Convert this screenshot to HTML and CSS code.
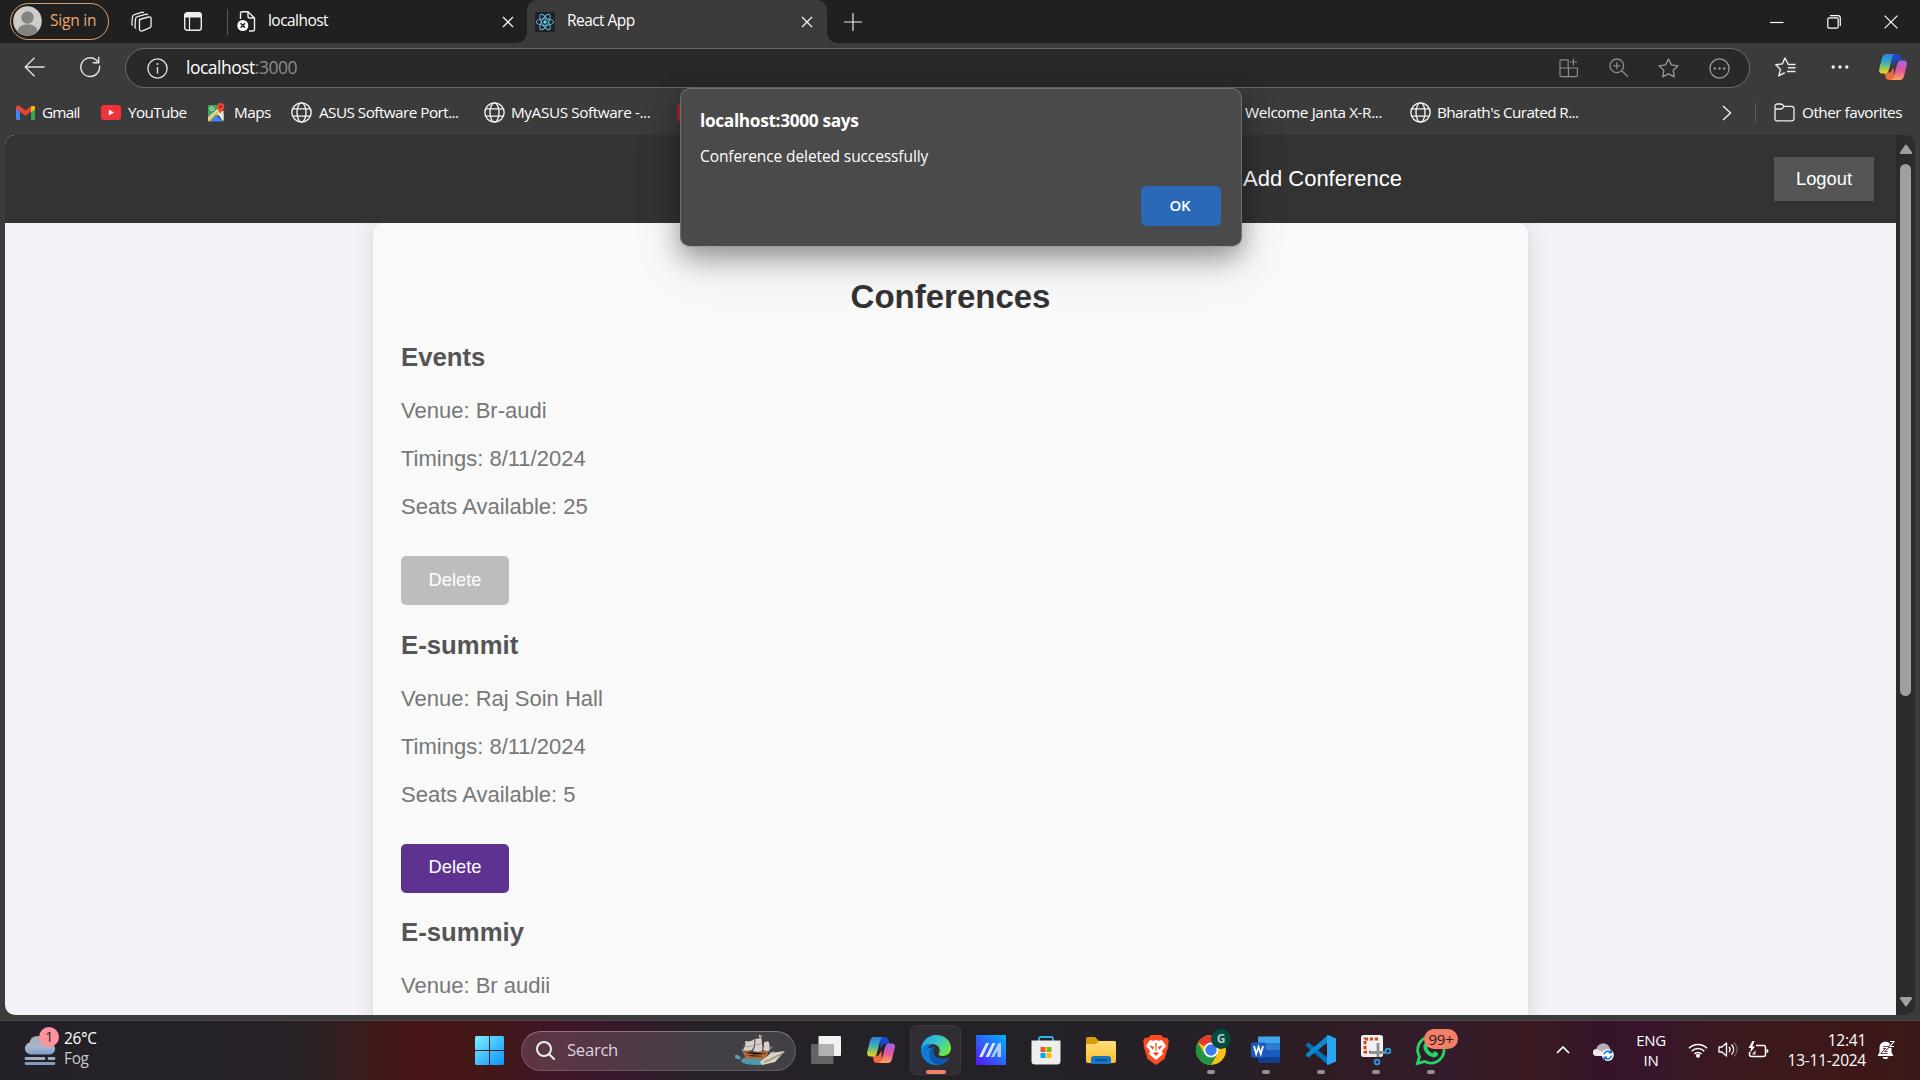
FILE: index.html
```html
<!DOCTYPE html>
<html lang="en">
<head>
<meta charset="utf-8">
<title>React App</title>
<link rel="stylesheet" href="styles.css">
</head>
<body>
<svg class="defs" width="0" height="0">
  <defs>
    <linearGradient id="cpA" x1="0" y1="0" x2="0" y2="1"><stop offset="0" stop-color="#2f7fe0"/><stop offset=".4" stop-color="#35a9c4"/><stop offset=".7" stop-color="#8cc561"/><stop offset="1" stop-color="#f6cf1e"/></linearGradient>
    <linearGradient id="cpB" x1="0" y1="0" x2="0" y2="1"><stop offset="0" stop-color="#a163ee"/><stop offset=".5" stop-color="#e4539c"/><stop offset="1" stop-color="#fba45e"/></linearGradient>
    <linearGradient id="win" x1="0" y1="0" x2="1" y2="1"><stop offset="0" stop-color="#7cf0ff"/><stop offset="1" stop-color="#0a92ff"/></linearGradient>
    <linearGradient id="edgeTop" x1="0" y1="0" x2="1" y2=".6"><stop offset="0" stop-color="#1a9fe0"/><stop offset=".5" stop-color="#35c1cf"/><stop offset="1" stop-color="#6be84a"/></linearGradient>
    <linearGradient id="asus" x1="0" y1="1" x2="1" y2="0"><stop offset="0" stop-color="#5a12f5"/><stop offset=".5" stop-color="#2b66f8"/><stop offset="1" stop-color="#00b4ff"/></linearGradient>
    <linearGradient id="folder" x1="0" y1="0" x2="0" y2="1"><stop offset="0" stop-color="#ffe07a"/><stop offset="1" stop-color="#fcbf2c"/></linearGradient>
    <linearGradient id="cloud" x1="0" y1="0" x2="0" y2="1"><stop offset="0" stop-color="#a9adb3"/><stop offset=".6" stop-color="#a7b4cb"/><stop offset="1" stop-color="#7f9dd0"/></linearGradient>
    <symbol id="copilot" viewBox="0 0 28 26">
      <path d="M13 0h5c2 0 3 1 3.500 3l1 4h-6l-3 5z" fill="#1c48c8"/>
      <path d="M15 26h-5c-2 0-3-1-3.500-3l-1-4.500h6l3-5z" fill="#ef6a3c"/>
      <path d="M7 0h9c-2 1-2.600 2.500-3.200 5L10 15.500c-.8 3-2 4-4.500 4H3C.6 19.500-.4 17.500.2 15L3 4C3.700 1.500 5 0 7 0z" fill="url(#cpA)"/>
      <path d="M21 26h-9c2-1 2.600-2.500 3.200-5L18 10.500c.8-3 2-4 4.500-4H25c2.400 0 3.400 2 2.800 4.500L25 22c-.7 2.500-2 4-4 4z" fill="url(#cpB)"/>
    </symbol>
    <symbol id="globe" viewBox="0 0 20 20">
      <g fill="none" stroke="#f4f4f4" stroke-width="1.300"><circle cx="10" cy="10" r="9.200"/><ellipse cx="10" cy="10" rx="4.300" ry="9.200"/><path d="M1.800 6.500h16.400M1.800 13.500h16.400"/></g>
    </symbol>
    <symbol id="close" viewBox="0 0 12 12"><path d="M1 1l10 10M11 1L1 11" stroke="#f0f0f0" stroke-width="1.300" fill="none"/></symbol>
  </defs>
</svg>

<div class="screen">
  <header class="tabbar">
    <div class="profile">
      <svg width="29" height="30" viewBox="0 0 29 30"><ellipse cx="14.500" cy="15" rx="14.300" ry="14.800" fill="#cfcdca"/><circle cx="14.500" cy="11.500" r="6.200" fill="#858380"/><path d="M4.500 25c1-5 5-6.500 10-6.500s9 1.500 10 6.500c-5 6-15 6-20 0z" fill="#858380"/></svg>
      <span>Sign in</span>
    </div>
    <svg class="workspaces" width="22" height="22" viewBox="0 0 22 22" fill="none" stroke="#ededed" stroke-width="1.300"><path d="M8.500 8.500l9-2.500c1.500-.4 2.600.3 2.600 1.500v7c0 1.300-.6 2-1.600 2.300l-7 3c-1.800.7-3-.2-3-1.600z"/><path d="M5.200 17.500c-1-.3-1.300-1-1.200-2L4.500 8c.1-1.200.8-2 2-2.300l8-2.400c1-.3 2 0 2.300.8"/><path d="M1.700 14.500C1 14 .8 13.300.9 12.500L1.500 6c.1-1.300.8-2 2-2.300l7-2.300c1-.3 1.800-.1 2.200.6"/></svg>
    <svg class="vertical-tabs" width="18" height="19" viewBox="0 0 18 19"><rect x=".7" y=".7" width="16.600" height="17.600" rx="2.500" fill="none" stroke="#eee" stroke-width="1.400"/><path d="M1 1h16v4.500H1z" fill="#eee"/><path d="M5.500 5v13" stroke="#eee" stroke-width="1.200"/></svg>
    <i class="tab-divider"></i>
    <div class="tab">
      <svg width="19" height="21" viewBox="0 0 19 21"><path d="M3.500 8V2.500C3.500 1.300 4 .8 5 .8h6L17.500 7v11c0 1.300-.6 2-1.800 2H12M11 1v4.500C11 6.600 11.500 7 12.500 7h5" fill="none" stroke="#eee" stroke-width="1.400"/><circle cx="5.800" cy="14.500" r="5.500" fill="#fff"/><path d="M3.600 12.300l4.400 4.400m0-4.400l-4.400 4.400" stroke="#222" stroke-width="1.500"/></svg>
      <span class="tab-title">localhost</span>
      <svg class="tab-close" width="12" height="12"><use href="#close"/></svg>
    </div>
    <div class="tab active">
      <svg width="20" height="20" viewBox="0 0 20 20"><rect width="20" height="20" rx="2" fill="#202124"/><g fill="none" stroke="#61c5e0" stroke-width=".9"><ellipse cx="10" cy="10" rx="8.800" ry="3.300"/><ellipse cx="10" cy="10" rx="8.800" ry="3.300" transform="rotate(60 10 10)"/><ellipse cx="10" cy="10" rx="8.800" ry="3.300" transform="rotate(120 10 10)"/></g><circle cx="10" cy="10" r="1.700" fill="#70dcf5"/></svg>
      <span class="tab-title">React App</span>
      <svg class="tab-close" width="12" height="12"><use href="#close"/></svg>
    </div>
    <svg class="new-tab" width="18" height="18" viewBox="0 0 18 18"><path d="M9 0v18M0 9h18" stroke="#e8e8e8" stroke-width="1.200"/></svg>
    <div class="window-controls">
      <svg width="14" height="14" viewBox="0 0 14 14"><path d="M0 7.500h13.500" stroke="#fff" stroke-width="1.200"/></svg>
      <svg width="14" height="14" viewBox="0 0 14 14" fill="none" stroke="#fff" stroke-width="1.200"><rect x=".8" y="2.800" width="10.400" height="10.400" rx="1.500"/><path d="M3 .7h8c1.500 0 2.300.8 2.300 2.300v8"/></svg>
      <svg width="14" height="14" viewBox="0 0 14 14"><path d="M.6.6l12.800 12.800M13.400.6L.6 13.400" stroke="#fff" stroke-width="1.200"/></svg>
    </div>
  </header>

  <div class="toolbar">
    <svg class="back" width="21" height="20" viewBox="0 0 21 20" fill="none" stroke="#e4e4e4" stroke-width="1.300"><path d="M10.500.8L1.200 10l9.300 9.200M1.200 10H20.500"/></svg>
    <svg class="reload" width="21" height="22" viewBox="0 0 21 22" fill="none" stroke="#e4e4e4" stroke-width="1.400"><path d="M19.500 9.500A9.400 9.400 0 1 1 16 3.700l2.500 2.800M18.700.8v6h-6"/></svg>
    <div class="address">
      <svg width="21" height="21" viewBox="0 0 21 21"><circle cx="10.500" cy="10.500" r="9.600" fill="none" stroke="#e4e4e4" stroke-width="1.300"/><path d="M10.500 9v6.500" stroke="#e4e4e4" stroke-width="1.400"/><circle cx="10.500" cy="6" r="1" fill="#e4e4e4"/></svg>
      <span class="url">localhost<span class="port">:3000</span></span>
      <div class="address-actions">
        <svg width="20" height="20" viewBox="0 0 20 20" fill="none" stroke="#8b8b8b" stroke-width="1.200"><path d="M9.200 10V1.800H2.200c-.8 0-1.200.4-1.200 1.200v14.500c0 .8.400 1.200 1.200 1.200h15c.8 0 1.200-.4 1.200-1.200V10H1M9.500 10v8.500M14.500.5v7M11 4h7"/></svg>
        <svg width="20" height="20" viewBox="0 0 20 20" fill="none" stroke="#8b8b8b" stroke-width="1.300"><circle cx="7.800" cy="7.800" r="6.800"/><path d="M12.800 12.800l6 6M7.800 4.300v7M4.300 7.800h7"/></svg>
        <svg width="21" height="20" viewBox="0 0 21 20" fill="none" stroke="#999" stroke-width="1.300" stroke-linejoin="round"><path d="M10.500 1l2.900 5.900 6.500.9-4.700 4.600 1.100 6.500-5.800-3-5.800 3 1.100-6.500L1.100 7.800l6.500-.9z"/></svg>
        <svg width="21" height="21" viewBox="0 0 21 21"><circle cx="10.500" cy="10.500" r="9.600" fill="none" stroke="#999" stroke-width="1.300"/><g fill="#999"><circle cx="5.800" cy="10.500" r="1.200"/><circle cx="10.500" cy="10.500" r="1.200"/><circle cx="15.200" cy="10.500" r="1.200"/></g></svg>
      </div>
    </div>
    <svg class="favorites" width="21" height="20" viewBox="0 0 21 20" fill="none" stroke="#eee" stroke-width="1.400" stroke-linejoin="round"><path d="M20.500 7.500h-7.200L10 1 7.300 6.900l-6.500.9 4.700 4.600-1.700 6.500 6-3.200M13 10.800h7.500M12 14.500h8.500"/></svg>
    <svg class="more" width="18" height="4" viewBox="0 0 18 4" fill="#f0f0f0"><circle cx="2.200" cy="2" r="1.700"/><circle cx="9" cy="2" r="1.700"/><circle cx="15.800" cy="2" r="1.700"/></svg>
    <svg class="copilot" width="28" height="26"><use href="#copilot"/></svg>
  </div>

  <nav class="bookmarks">
    <a class="bm gmail"><svg width="19" height="15" viewBox="0 0 19 15"><path d="M0 2v11.500C0 14.500.5 15 1.500 15H4V5z" fill="#4285f4"/><path d="M19 2v11.500c0 1-.5 1.500-1.500 1.500H15V5z" fill="#34a853"/><path d="M0 2.500C0 .5 2 0 3.200.8L9.500 5.500 15.800.8V6L9.500 10.700 0 3.700z" fill="#ea4335"/><path d="M15 1.500C17 0 19 .7 19 2.500v2L15 7.300z" fill="#fbbc04"/></svg><span>Gmail</span></a>
    <a class="bm youtube"><svg width="20" height="15" viewBox="0 0 20 15"><rect width="20" height="15" rx="3" fill="#f0323c"/><path d="M7.800 4.500v6l5.200-3z" fill="#fff"/></svg><span>YouTube</span></a>
    <a class="bm maps"><svg width="19" height="19" viewBox="0 0 19 19"><path d="M1 16.500V3.500C1 2.500 1.500 2 2.500 2H12v5.500L1 16.500z" fill="#3fa55f"/><path d="M1 14.500L11 5.500l5.500 5.500v6L10 11l-8 7.500Q1 18 1 17z" fill="#e4e8ea"/><path d="M1.300 15.500L13 5.500l3 3.500-2.500 1L3 18.500Q1 18.500 1.300 15.500z" fill="#f4c542"/><path d="M2.500 18.500L9 11.500l6.500 7z" fill="#4285f4"/><path d="M11 10.500l5.500-3V17q0 1-1 1z" fill="#e4e8ea"/><circle cx="4.800" cy="5.800" r="1.700" fill="none" stroke="#d5ead9"/><path d="M13.500 11c-.3-3-3.700-4-3.700-7.200a3.800 3.800 0 0 1 7.600 0c0 3.200-3.600 4.200-3.900 7.200z" fill="#e2483b"/><circle cx="13.600" cy="3.800" r="1.300" fill="#8c1e18"/></svg><span>Maps</span></a>
    <a class="bm asus"><svg width="21" height="21"><use href="#globe"/></svg><span>ASUS Software Port...</span></a>
    <a class="bm myasus"><svg width="21" height="21"><use href="#globe"/></svg><span>MyASUS Software -...</span></a>
    <i class="bm-red"></i>
    <a class="bm welcome"><span>Welcome Janta X-R...</span></a>
    <a class="bm bharath"><svg width="21" height="21"><use href="#globe"/></svg><span>Bharath's Curated R...</span></a>
    <div class="bm-end">
      <svg class="bm-more" width="10" height="16" viewBox="0 0 10 16"><path d="M1 1l7.500 7L1 15" fill="none" stroke="#eee" stroke-width="1.400"/></svg>
      <i class="bm-divider"></i>
      <a class="bm other"><svg width="21" height="19" viewBox="0 0 21 19" fill="none" stroke="#eee" stroke-width="1.300"><path d="M1 15.500V3.500C1 2 1.800 1 3.300 1h3.500c.8 0 1.200.3 1.700.8L10 3.400h7.700c1.500 0 2.300.8 2.300 2.300v9.800c0 1.500-.8 2.400-2.300 2.400H3.300C1.800 17.900 1 17 1 15.500zM1 6h5.800c.8 0 1.200-.3 1.700-.8L10 3.400"/></svg><span>Other favorites</span></a>
    </div>
  </nav>

  <div class="viewport">
    <div class="page">
      <div class="navbar">
        <a class="nav-link">Add Conference</a>
        <button class="logout">Logout</button>
      </div>
      <main class="content">
        <section class="card">
          <h2>Conferences</h2>
          <article class="conference">
            <h3>Events</h3>
            <p>Venue: Br-audi</p>
            <p>Timings: 8/11/2024</p>
            <p>Seats Available: 25</p>
            <button class="delete disabled">Delete</button>
          </article>
          <article class="conference">
            <h3>E-summit</h3>
            <p>Venue: Raj Soin Hall</p>
            <p>Timings: 8/11/2024</p>
            <p>Seats Available: 5</p>
            <button class="delete">Delete</button>
          </article>
          <article class="conference">
            <h3>E-summiy</h3>
            <p>Venue: Br audii</p>
          </article>
        </section>
      </main>
    </div>
    <div class="scrollbar">
      <svg width="14" height="11" viewBox="0 0 14 11"><path d="M6 1.200L1.200 8c-.6 1-.2 2 1 2h9.600c1.200 0 1.600-1 1-2L8 1.200c-.6-.8-1.400-.8-2 0z" fill="#9f9f9f"/></svg>
      <i class="thumb"></i>
      <svg width="14" height="11" viewBox="0 0 14 11"><path d="M6 9.800L1.200 3c-.6-1-.2-2 1-2h9.600c1.200 0 1.600 1 1 2L8 9.800c-.6.800-1.400.8-2 0z" fill="#9f9f9f"/></svg>
    </div>
  </div>

  <footer class="taskbar">
    <div class="weather">
      <div class="weather-icon">
        <svg width="32" height="32" viewBox="0 0 32 32"><path d="M8 21.500c-4.500 0-7-2.500-7-6 0-3 2-5.500 4.500-5.800C6.500 5 9.500 3 14 3c5 0 8 3 8.500 6.500 5 0 8.500 2 8.500 6.200 0 3.500-2.500 5.800-6.500 5.800z" fill="url(#cloud)"/><path d="M2 25.500h18M25 25.500h5" stroke="#a1b0bf" stroke-width="2.800" stroke-linecap="round"/><path d="M2 30.500h28" stroke="#8499bf" stroke-width="2.800" stroke-linecap="round"/></svg>
        <b class="weather-badge">1</b>
      </div>
      <div class="weather-text"><span>26°C</span><span class="dim">Fog</span></div>
    </div>
    <svg class="start" width="29" height="29" viewBox="0 0 29 29" fill="url(#win)"><path d="M0 1.500Q0 0 1.500 0H14v14H0zM15 0h12.500Q29 0 29 1.500V14H15zM0 15h14v14H1.500Q0 29 0 27.500zM15 15h14v12.500q0 1.500-1.500 1.500H15z"/></svg>
    <div class="search">
      <svg width="19" height="19" viewBox="0 0 19 19" fill="none" stroke="#eee" stroke-width="2"><circle cx="8" cy="8" r="7"/><path d="M13 13l5 5" stroke-linecap="round"/></svg>
      <span>Search</span>
      <svg class="ship" width="51" height="31" viewBox="0 0 51 31"><path d="M7 24c5-3 9 1 14-2 5 0 9 1 16 0v5c-6 3-16 4-26 2-5-1-6-3-4-5z" fill="#4b9aab"/><path d="M0 21c2-1 4 0 5 2-2 1-4 0-5-2zM7 14l3 5M33 15l4-3M35 18l5-1" stroke="#4fa5b5" stroke-width="1.500" fill="#4fa5b5"/><path d="M8 14c7 4 18 3 26 1-1 5-4 9-8 10-6-2-11-2-15 0-1-4-3-7-3-11z" fill="#b36c3b"/><path d="M10 17c7 3 15 3 21 1M12 20c5 2 10 2 15 1" stroke="#7c4326" stroke-width="1"/><path d="M15 3v14M24 1v17M31 6v11" stroke="#7a5236" stroke-width="1"/><path d="M10 6c5 1 7 0 9-2 1 4 0 8-2 11-3 1-6 1-9 0 2-3 3-6 2-9zM20 4c3 0 5-1 6-2 1 5 2 9 1 14-3 1-6 1-9 0 2-4 3-8 2-12zM29 7c2 0 3 0 4-1 2 3 2 7 1 10-2 0-4 0-6-1 1-3 1-5 1-8z" fill="#d8d1cb"/><path d="M8 11c4 1 7 1 10-1M19 9c3 1 5 1 8-1" stroke="#9d938d" stroke-width=".8" fill="none"/><path d="M24 0l4 1-4 1" fill="#e8dfd8"/><path d="M25 27l11-9 14-2-10 11-13 3z" fill="#ded5c5"/><path d="M28 27l20-9M30 28l17-9" stroke="#8f826e" stroke-width=".8"/></svg>
    </div>
    <div class="apps">
      <div class="app"><svg width="30" height="30" viewBox="0 0 30 30"><rect x="7.500" y="1" width="22.500" height="20" rx="1" fill="#f2f2f2"/><rect x="0" y="9" width="22.500" height="20" rx="1" fill="#656365"/><path d="M7.500 9h15v12h-15z" fill="#b2b1b2"/></svg></div>
      <div class="app"><svg width="28" height="26"><use href="#copilot"/></svg></div>
      <div class="app focus"><svg width="30" height="30" viewBox="0 0 30 30"><path d="M15 0C7 0 0 6.500 0 15s7 15 15 15c5.500 0 10-2.500 12.500-6.500-3 2-7 2.500-10.500 1-5-2-6.500-7-4-11-8-3-8 5-7 9-4-6 0-14 9-13.500z" fill="#1283d8"/><path d="M.1 14C1.500 5 8 0 15.500 0 24 0 30 6 30 13c0 5-4 8-8.500 8-3 0-4.500-1-3.700-2.200C20 16 18.500 9 11 9 5.500 9 1.500 11.500.1 14z" fill="url(#edgeTop)"/><path d="M12 11.500c-3 2-5 6-3.500 10.500C10 27 14 29.500 17 29.800c4.500 0 8-2.300 10.500-6.300.4-.6-.1-1-.7-.7-5 2.500-13.800.2-14.300-6.300-.1-2 .4-3.500 1.500-5z" fill="#1058a8"/><path d="M0 14.500C1 11 6 8.500 11 9c-5 3-7 9-3.500 15.500L11 29C4.500 27 0 21.500 0 14.500z" fill="#0a7bd7"/></svg><i class="run"></i></div>
      <div class="app"><svg width="30" height="30" viewBox="0 0 30 30"><rect width="30" height="30" fill="url(#asus)"/><path d="M3 22L10 8h3L6.500 22zM9.500 22L16.500 8h3L13 22z" fill="#d8e6ff"/><path d="M15 22l7.500-14H25v14h-3.500v-7L18 22z" fill="#b4ceff"/></svg></div>
      <div class="app"><svg width="30" height="30" viewBox="0 0 30 30"><path d="M8 7V4q0-2 2-2h10q2 0 2 2v3" fill="none" stroke="#2fb3ea" stroke-width="1.800"/><path d="M.5 5.500h29V26q0 3.500-3.500 3.500H4Q.5 29.500.5 26z" fill="#eeeeee"/><path d="M9.500 12h5v5h-5z" fill="#f25022"/><path d="M15.500 12h5v5h-5z" fill="#7fba00"/><path d="M9.500 18h5v5h-5z" fill="#00a4ef"/><path d="M15.500 18h5v5h-5z" fill="#ffb900"/></svg></div>
      <div class="app"><svg width="30" height="30" viewBox="0 0 30 30"><path d="M0 4q0-2 2-2h7l4 4h15q2 0 2 2v6H0z" fill="#dc9b08"/><path d="M0 9h10l3-3h15q2 0 2 2v18q0 2-2 2H2q-2 0-2-2z" fill="url(#folder)"/><path d="M5 29v-5q0-3 3-3h14q3 0 3 3v5z" fill="#1476c4"/><path d="M9 25h12" stroke="#0b477b" stroke-width="1.600"/></svg></div>
      <div class="app"><svg width="26" height="30" viewBox="0 0 26 30"><path d="M8 0h10l3 3 3-.5L26 6l-1 3 .5 2-4 13L13 30l-8.500-6L.5 11 1 9 0 6l2-3.500L5 3z" fill="#fb4a1d"/><path d="M7 5l3 .8L13 5l3 .8L19 5l4 6-4 5 1 3-7 6-7-6 1-3-4-5z" fill="#fff"/><path d="M6 10l5 2-1 3zM20 10l-5 2 1 3zM10 18l3-1 3 1-3 3zM12.300 8h1.400l-.2 8h-1z" fill="#f44a1e"/></svg></div>
      <div class="app"><svg width="30" height="30" viewBox="0 0 30 30"><circle cx="15" cy="15" r="15" fill="#fbc116"/><path d="M15 15L2 7.500A15 15 0 0 1 28 7.500H15z" fill="#e33b2e"/><path d="M2 7.500A15 15 0 0 0 15 30l6.500-11.200L15 15 8.500 18.700z" fill="#229342"/><circle cx="15" cy="15" r="7.400" fill="#fff"/><circle cx="15" cy="15" r="5.700" fill="#3b7ded"/></svg><b class="badge g">G</b><i class="run"></i></div>
      <div class="app"><svg width="30" height="30" viewBox="0 0 30 30"><path d="M7 1.500h22V8H7z" fill="#41a5ee"/><path d="M7 8h22v7H7z" fill="#2b7cd3"/><path d="M7 15h22v7H7z" fill="#185abd"/><path d="M7 22h22v6H9q-2 0-2-2z" fill="#103f91"/><rect y="7.500" width="15" height="15" rx="1.500" fill="#1b5bbb"/><path d="M3 11l2.200 8L7.500 12l2.300 7L12 11" fill="none" stroke="#fff" stroke-width="1.800"/></svg><i class="run"></i></div>
      <div class="app"><svg width="30" height="30" viewBox="0 0 30 30"><path d="M0 9.500l2.500-2L22 23v7L.5 11.500z" fill="#0072b8"/><path d="M0 20.500l2.500 2L22 7V0L.5 18.500z" fill="#0e88d0"/><path d="M22 0l8 3.500v23L22 30l-1-.5V.5z" fill="#26a6f2"/></svg><i class="run"></i></div>
      <div class="app"><svg width="30" height="30" viewBox="0 0 30 30"><rect x="0" y="0" width="22" height="22" rx="2.500" fill="#f0f0f0"/><path d="M17 4H4v13h5" fill="none" stroke="#d4491c" stroke-width="3" stroke-dasharray="3.200 1.800"/><path d="M17 8v14M9 17.500h15" stroke="#8b9096" stroke-width="2.800"/><circle cx="27" cy="16" r="2.400" fill="none" stroke="#289ce0" stroke-width="1.800"/><circle cx="16" cy="27" r="2.400" fill="none" stroke="#289ce0" stroke-width="1.800"/></svg><i class="run"></i></div>
      <div class="app"><svg width="30" height="30" viewBox="0 0 30 30"><path d="M1.500 28.500l2-7A13.200 13.200 0 1 1 8.700 26.500z" fill="none" stroke="#25d366" stroke-width="2.800"/><path d="M9 8c1.500-1 2.500 0 3.500 3l-1.300 2c1.500 3 3 4.200 5.500 5.300l1.800-2c3 1 4 2 3.500 3.500-1 2.300-3.500 3-6 2.200-4.500-1.500-7.500-5-8.500-8.500C7 11 7.500 9 9 8z" fill="#25d366"/></svg><b class="badge wa">99+</b><i class="run"></i></div>
    </div>
    <div class="tray">
      <svg class="chev" width="14" height="8" viewBox="0 0 14 8"><path d="M1 7l6-6 6 6" fill="none" stroke="#fff" stroke-width="1.700"/></svg>
      <svg class="sync" width="21" height="18" viewBox="0 0 21 18"><path d="M4 13C1 13 0 11.500 0 9.500 0 7 1.500 6 3.500 5.800 4.500 2 7 .5 10.500.5c4 0 6 2.500 6.500 5.500l2 3-7 4z" fill="#b7adb5"/><path d="M4 13C1 13 0 11.500 0 9.500 0 7 2 5.800 5 6.500L14 11l-2 2z" fill="#ece9ec"/><circle cx="14.800" cy="12" r="6" fill="#fff"/><path d="M11 11.500a4 4 0 0 1 7-2M18.600 12.500a4 4 0 0 1-7 2M18.300 7v2.800h-2.800M11.300 17v-2.800h2.800" fill="none" stroke="#1272d3" stroke-width="1.500"/></svg>
      <div class="lang"><span>ENG</span><span>IN</span></div>
      <svg class="wifi" width="20" height="16" viewBox="0 0 20 16" fill="none" stroke="#fff" stroke-width="1.500"><path d="M1 6.300a12.500 12.500 0 0 1 18 0M3.700 9.200a8.800 8.800 0 0 1 12.600 0M6.400 12a5 5 0 0 1 7.200 0"/><circle cx="10" cy="13.800" r="1.300" fill="#fff"/></svg>
      <svg class="volume" width="20" height="17" viewBox="0 0 20 17" fill="none" stroke="#fff" stroke-width="1.300"><path d="M1 6v5h3l4.500 4V2L4 6z" stroke-linejoin="round"/><path d="M11 6c1.300 1.500 1.300 3.500 0 5M13.500 3.500c2.800 3 2.800 7 0 10"/><path d="M16 1.500c4 4.500 4 9.500 0 14" stroke="#7a5c60"/></svg>
      <svg class="battery" width="21" height="18" viewBox="0 0 21 18"><path d="M8 4.500h7.500q2 0 2 2v7q0 2-2 2h-12q-2 0-2-2V11" fill="none" stroke="#fff" stroke-width="1.500"/><path d="M18.500 8q2 .2 2 2t-2 2z" fill="#fff"/><path d="M4.500 0L.5 7h2.700L2 12l5-6.500H4.300L6.500 0z" fill="#fff"/><path d="M4 13.500l3.500-4.500v4.500z" fill="#ddd"/></svg>
      <div class="clock"><span>12:41</span><span>13-11-2024</span></div>
      <svg class="bell" width="18" height="20" viewBox="0 0 18 20"><path d="M.5 16L2.500 12.500V8c0-4 2.500-6.300 6-6.300S14.500 4 14.500 8v4.500l2 3.500zM5.500 17h6c-.5 2.700-5.500 2.700-6 0z" fill="#fff"/><path d="M6 7.500h4.500l-4.500 5h4.500M13 1.500h4l-4 5h4" fill="none" stroke="#3a1718" stroke-width="2.600"/><path d="M6 7.500h4.500l-4.500 5h4.500M13 1.500h4l-4 5h4" fill="none" stroke="#fff" stroke-width="1.100"/></svg>
    </div>
  </footer>

  <div class="dialog" role="alertdialog">
    <h1>localhost:3000 says</h1>
    <p>Conference deleted successfully</p>
    <button>OK</button>
  </div>
</div>
</body>
</html>
```
FILE: styles.css
```css
* { box-sizing: border-box; }
body { margin: 0; background: #3b3b3b; overflow: hidden; font-family: "Open Sans", "Noto Sans", sans-serif; font-size: 15px; color: #fff; }
svg { display: block; flex: none; }
h1, h2, h3, p { margin: 0; }
button { border: 0; padding: 0; color: #fff; font-family: inherit; }
.defs { position: absolute; }
.screen { position: relative; width: 1920px; height: 1080px; display: flex; flex-direction: column; overflow: hidden; }

/* Tab strip */
.tabbar { height: 43px; flex: none; display: flex; align-items: center; background: #202020; }
.profile { width: 99px; height: 37px; margin: -1px 0 0 10px; display: flex; align-items: center; gap: 8px; padding-left: 2px; border: 1.500px solid #dfa06b; border-radius: 19px; color: #e9a76f; font-size: 15.500px; letter-spacing: -.2px; white-space: nowrap; }
.profile span { padding-bottom: 2px; }
.workspaces { margin-left: 22px; }
.vertical-tabs { margin-left: 31px; }
.tab-divider { width: 1px; height: 26px; margin-left: 25px; background: #5a5a5a; }
.tab { height: 43px; display: flex; align-items: center; width: 299px; padding: 0 13px 0 9px; font-size: 15.500px; letter-spacing: -.55px; }
.tab .tab-title { margin-left: 12px; padding-bottom: 3px; }
.tab .tab-close { margin-left: auto; }
.tab.active { position: relative; width: 300px; background: #3b3b3b; border-radius: 10px 10px 0 0; padding: 0 14px 0 8px; }
.tab.active::before, .tab.active::after { content: ""; position: absolute; bottom: 0; width: 10px; height: 10px; }
.tab.active::before { left: -10px; background: radial-gradient(circle at 0 0, transparent 9.500px, #3b3b3b 10px); }
.tab.active::after { right: -10px; background: radial-gradient(circle at 100% 0, transparent 9.500px, #3b3b3b 10px); }
.new-tab { margin-left: 17px; }
.window-controls { margin-left: auto; display: flex; gap: 43px; padding-right: 22px; }

/* Address row */
.toolbar { height: 47px; flex: none; display: flex; align-items: center; }
.back { margin-left: 24px; }
.reload { margin-left: 35px; }
.address { width: 1625px; height: 40px; margin: 3px 0 0 24px; padding: 0 19px 0 21px; display: flex; align-items: center; background: #292929; border: 1px solid #6b6b6b; border-radius: 20px; }
.url { margin-left: 18px; padding-bottom: 2px; font-size: 17.500px; letter-spacing: -.5px; }
.port { color: #8d8d8d; }
.address-actions { margin-left: auto; display: flex; align-items: center; gap: 30px; }
.address-actions svg:nth-child(-n+2) { margin-right: -.500px; }
.favorites { margin-left: 25px; }
.more { margin-left: 35px; }
.copilot { margin-left: 30px; }

/* Favourites row */
.bookmarks { height: 45px; flex: none; display: flex; align-items: center; white-space: nowrap; font-size: 15.300px; letter-spacing: -.5px; }
.bm { display: flex; align-items: center; }
.bm span { padding-bottom: 1px; }
.gmail { width: 85px; padding-left: 16px; gap: 7px; letter-spacing: -.8px; }
.youtube { width: 106px; padding-left: 16px; gap: 7px; letter-spacing: -.65px; }
.maps { width: 88px; padding-left: 16px; gap: 8px; }
.asus { width: 193px; padding-left: 12px; gap: 7px; letter-spacing: -.55px; }
.myasus { width: 205px; padding-left: 12px; gap: 6px; letter-spacing: -.4px; }
.bm-red { width: 20px; height: 16px; background: #a82a2a; }
.welcome { width: 165px; margin-left: 548px; letter-spacing: -.4px; }
.bharath { width: 185px; gap: 6px; letter-spacing: -.6px; }
.bm-end { margin-left: auto; display: flex; align-items: center; padding-right: 18px; }
.bm-divider { width: 1px; height: 20px; margin-left: 23px; background: #5e5e5e; }
.other { margin-left: 18px; gap: 7px; }

/* Page frame */
.viewport { height: 880px; flex: none; margin: 0 5px; display: flex; border-radius: 10px; overflow: hidden; }
.page { width: 1891px; background: #f3f2f8; overflow: hidden; font-family: "Liberation Sans", Arial, sans-serif; display: flex; flex-direction: column; }
.navbar { position: relative; height: 88px; flex: none; display: flex; align-items: center; justify-content: flex-end; padding-right: 22px; background: #333; font-size: 22px; }
.nav-link { margin-right: 372px; }
.logout { width: 100px; height: 44px; background: #555; font-size: 18.330px; }
.content { height: 792px; flex: none; display: flex; justify-content: center; overflow: hidden; }
.card { width: 1155px; height: 1000px; flex: none; padding: 55px 28px; background: #f9f9f9; border-radius: 11px; box-shadow: 0 0 22px rgba(0, 0, 0, .12); color: #555; }
.card h2 { height: 38px; line-height: 38px; text-align: center; font-size: 33px; color: #333; }
.conference { display: flex; flex-direction: column; align-items: flex-start; height: 287.700px; }
.card h2 + .conference { margin-top: 26px; }
.conference h3 { height: 30px; line-height: 30px; margin-bottom: 26px; font-size: 25.740px; }
.conference p { height: 26px; line-height: 26px; margin-bottom: 22px; font-size: 22px; color: #777; }
.delete { width: 108px; height: 49px; margin-top: 14px; padding-bottom: 2px; border-radius: 5px; background: #5e3291; font-size: 18.330px; }
.delete.disabled { background: #bdbdbd; }
.scrollbar { width: 19px; display: flex; flex-direction: column; align-items: center; background: #2b2b2b; padding: 9px 0 8px; }
.thumb { width: 11px; height: 532px; margin: 9px 0 auto; border-radius: 6px; background: #9f9f9f; }

/* Alert */
.dialog { position: absolute; left: 680px; top: 88px; width: 562px; height: 159px; padding: 20px 20px 0 19px; display: flex; flex-direction: column; background: #4a4a4a; border: 1px solid #707070; border-bottom: 1.500px solid #a0a0a0; border-radius: 10px; box-shadow: 0 10px 26px rgba(0, 0, 0, .35), 0 18px 50px rgba(0, 0, 0, .12); }
.dialog h1 { height: 24px; line-height: 24px; font-size: 17.300px; font-weight: 700; letter-spacing: -.35px; }
.dialog p { height: 22px; line-height: 22px; margin-top: 12px; font-size: 15.500px; letter-spacing: -.1px; }
.dialog button { width: 80px; height: 40px; margin: 19px 0 0 auto; padding: 0 2px 2px 0; border-radius: 5px; background: #2b69b8; font-size: 15px; font-weight: 600; letter-spacing: -.3px; }

/* Taskbar */
.taskbar { height: 60px; margin-top: auto; flex: none; display: flex; align-items: center; border-top: 1px solid #4b4346; background: linear-gradient(90deg, #232127 0, #252127 280px, #35201f 345px, #481515 410px, #431818 490px, #40152a 560px, #33192a 630px, #252127 710px, #232127 1190px, #2e1c24 1320px, #331c2c 1450px, #3a1a20 1530px, #35142a 1600px, #37162b 1660px, #3b1a1d 1740px, #3d1718 1850px, #3a1819 1920px); }
.weather { width: 475px; display: flex; gap: 8px; padding-left: 24px; line-height: 20px; letter-spacing: -.3px; }
.weather-icon { position: relative; margin-top: 2px; }
.weather-badge { position: absolute; left: 15px; top: -6px; width: 20px; height: 20px; line-height: 20px; text-align: center; border-radius: 50%; background: #ff939d; color: #222; font-size: 14px; font-weight: 400; }
.weather-text { display: flex; flex-direction: column; padding-bottom: 2px; margin-top: -2px; font-size: 15.400px; }
.dim { color: #cbc9cb; }
.search { width: 275px; height: 40px; margin-left: 17px; display: flex; align-items: center; padding: 0 9px 0 14px; border: 1px solid #ffffff28; border-top-color: #ffffff50; border-radius: 20px; background: #ffffff24; font-size: 16.700px; color: #ddd3d8; }
.search span { margin-left: 12px; letter-spacing: -.3px; padding-bottom: 2px; }
.ship { margin-left: auto; }
.apps { display: flex; margin: -1px 0 0 2px; }
.app { position: relative; width: 55px; height: 50px; display: flex; align-items: center; justify-content: center; }
.focus::before { content: ""; position: absolute; inset: 0 2px; border: 1px solid #3b383d; border-radius: 6px; background: #302e33; }
.app svg { position: relative; overflow: visible; }
.run { position: absolute; bottom: 1px; left: 24px; width: 8px; height: 4px; border-radius: 2px; background: #969196; }
.focus .run { left: 18px; bottom: 1px; width: 20px; background: #f47f68; }
.badge { position: absolute; top: 4px; height: 20px; line-height: 20px; border-radius: 10px; text-align: center; }
.badge.g { left: 28px; width: 20px; background: #024b40; color: #b5cbc5; font-size: 12px; }
.badge.wa { left: 21px; width: 34px; background: #f47f68; color: #2c1a18; font-size: 15px; font-weight: 400; letter-spacing: -.3px; }
.tray { flex: 1; display: flex; align-items: center; line-height: 20px; letter-spacing: -.3px; white-space: nowrap; margin-top: -2px; }
.chev { margin-left: 98px; }
.sync { margin-left: 23px; margin-top: 4px; }
.lang { width: 40px; margin-left: 17px; display: flex; flex-direction: column; text-align: center; }
.wifi { margin-left: 17px; }
.volume { margin-left: 10px; }
.battery { margin-left: 10px; }
.clock { width: 97px; display: flex; flex-direction: column; text-align: right; font-size: 15.500px; letter-spacing: -.25px; }
.bell { margin-left: 11px; }
```
